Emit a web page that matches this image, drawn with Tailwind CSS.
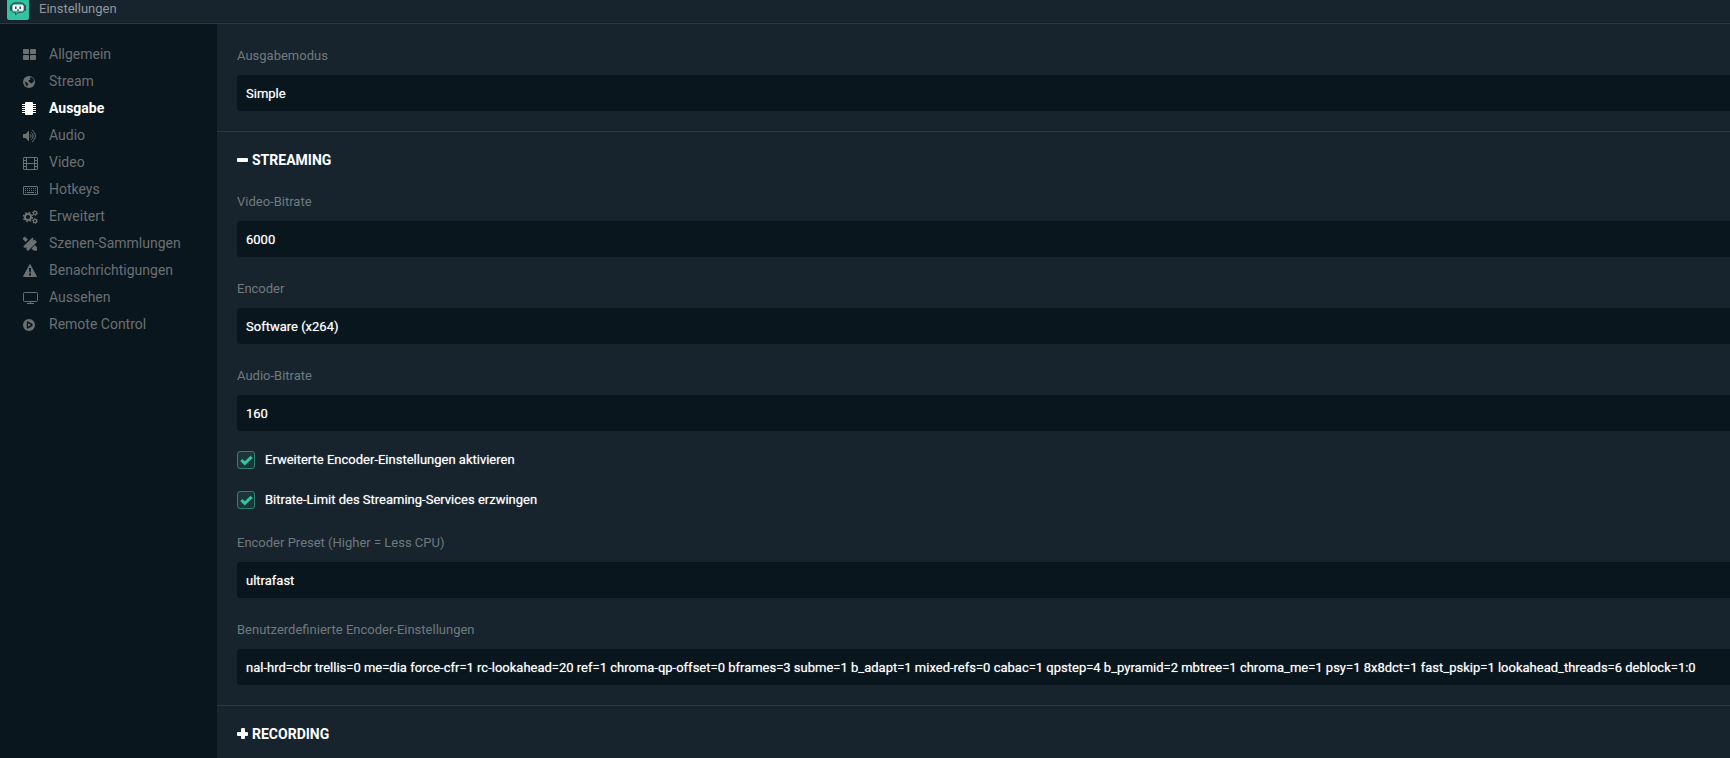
<!DOCTYPE html>
<html lang="de">
<head>
  <meta charset="UTF-8" />
  <meta name="viewport" content="width=device-width, initial-scale=1" />
  <title>Einstellungen</title>
  <script src="https://cdn.jsdelivr.net/npm/@tailwindcss/browser@4"></script>
  <style>
    body {
      font-family: 'Roboto', sans-serif;
    }
  </style>
</head>
<body class="bg-[#17242d] text-white min-h-screen flex flex-col overflow-x-hidden">

  <!-- Title bar -->
  <header class="flex items-start h-6 shrink-0 pl-[7px] gap-[10px] border-b border-[#2b383f]">
    <svg class="w-[22px] h-5" viewBox="0 0 22 20" aria-hidden="true">
      <path d="M0 0h22v18a2 2 0 0 1-2 2H2a2 2 0 0 1-2-2z" fill="#31c3a2" />
      <path d="M4.500 6C5 3.500 6.500 3 9 3h4c2.500 0 4 .5 4.500 3" fill="none" stroke="#34505a" stroke-width="1.400" />
      <rect x="3" y="5" width="2.500" height="6" rx="1.200" fill="#34505a" />
      <rect x="16.500" y="5" width="2.500" height="6" rx="1.200" fill="#34505a" />
      <rect x="5.500" y="4.800" width="11" height="6" rx="1.500" fill="#fff" />
      <path d="M8 6.500h1.600v2.500H8zM12.400 6.500H14v2.500h-1.600z" fill="#34505a" />
      <path d="M10 9.500h2v1.300h-2z" fill="#34505a" />
      <path d="M5 11.300c1 1 2 1.200 3.500 1.200V15l2.500-2.500h2.500c1.500 0 2.500-.2 3.500-1.200" fill="none" stroke="#34505a" stroke-width="1" />
    </svg>
    <h1 class="text-[13px] leading-[17px] text-[#91979a]">Einstellungen</h1>
  </header>

  <div class="flex flex-grow">
    <!-- Sidebar -->
    <nav class="w-[217px] shrink-0 bg-[#09161d] pt-[17px] text-sm leading-[27px] text-[#6b7073]">
      <a href="#" class="flex items-center pl-[22px] gap-[11px]">
        <svg class="w-4 h-[17px]" viewBox="0 0 16 17" fill="currentColor" aria-hidden="true">
          <rect x="1" y="3" width="6" height="5" rx="1" />
          <rect x="8" y="3" width="6" height="5" rx="1" />
          <rect x="1" y="9" width="6" height="5" rx="1" />
          <rect x="8" y="9" width="6" height="5" rx="1" />
        </svg>
        <span>Allgemein</span>
      </a>
      <a href="#" class="flex items-center pl-[22px] gap-[11px]">
        <svg class="w-4 h-[17px]" viewBox="0 0 16 17" aria-hidden="true">
          <circle cx="7" cy="9" r="6" fill="currentColor" />
          <path d="M8.500 4.300l2 .5 1.300 1.700.2 2-1 .3-.8 1.500-1.200.2L8 9.300 6.800 8.800 6.500 7.500l1.200-.8 1-.2L7.800 5.300zM2.500 8.500l2 .8L6.300 10.700 5.800 12l-.8 1.500-1-1.200-.5-1.800z" fill="#09161d" />
        </svg>
        <span>Stream</span>
      </a>
      <a href="#" class="flex items-center pl-[22px] gap-[11px] font-bold text-white" aria-current="page">
        <svg class="w-4 h-[17px]" viewBox="0 0 16 17" fill="currentColor" aria-hidden="true">
          <rect x="3" y="2" width="8" height="13" rx="1" />
          <path d="M0 4h14v1H0zM0 6h14v1H0zM0 8h14v1H0zM0 10h14v1H0zM0 12h14v1H0z" />
        </svg>
        <span>Ausgabe</span>
      </a>
      <a href="#" class="flex items-center pl-[22px] gap-[11px]">
        <svg class="w-4 h-[17px]" viewBox="0 0 16 17" fill="none" stroke="currentColor" stroke-linecap="round" aria-hidden="true">
          <path d="M1 7h2.500L7 3.500v11L3.500 11H1z" fill="currentColor" stroke="none" />
          <path d="M8.500 7.500a2 2 0 0 1 0 3M9.500 5.500a4.200 4.200 0 0 1 0 7M10.500 3.500a6.500 6.500 0 0 1 0 11" />
        </svg>
        <span>Audio</span>
      </a>
      <a href="#" class="flex items-center pl-[22px] gap-[11px]">
        <svg class="w-4 h-[17px]" viewBox="0 0 16 17" fill="none" stroke="currentColor" aria-hidden="true">
          <rect x="1.500" y="3.500" width="14" height="12" rx="0.500" />
          <path d="M4.500 3.500v12M12.500 3.500v12M4.500 9.500h8M1.500 6.500h3M1.500 9.500h3M1.500 12.500h3M12.500 6.500h3M12.500 9.500h3M12.500 12.500h3" />
        </svg>
        <span>Video</span>
      </a>
      <a href="#" class="flex items-center pl-[22px] gap-[11px]">
        <svg class="w-4 h-[17px]" viewBox="0 0 16 17" fill="none" stroke="currentColor" aria-hidden="true">
          <rect x="1.500" y="5.500" width="14" height="8" rx="0.500" />
          <path d="M3 7.500h11M3 9.500h11" stroke-dasharray="1 1" />
          <path d="M3 11.500h1M5 11.500h7M13 11.500h1" />
        </svg>
        <span>Hotkeys</span>
      </a>
      <a href="#" class="flex items-center pl-[22px] gap-[11px]">
        <svg class="w-4 h-[17px]" viewBox="0 0 16 17" fill="none" stroke="currentColor" aria-hidden="true">
          <circle cx="6" cy="9" r="3" stroke-width="2" />
          <circle cx="6" cy="9" r="4.500" stroke-width="1.500" stroke-dasharray="1.770 1.764" />
          <circle cx="13" cy="5" r="1.600" stroke-width="1.300" />
          <circle cx="13" cy="5" r="2.500" stroke-dasharray="1.300 1.318" />
          <circle cx="13" cy="13" r="1.600" stroke-width="1.300" />
          <circle cx="13" cy="13" r="2.500" stroke-dasharray="1.300 1.318" />
        </svg>
        <span>Erweitert</span>
      </a>
      <a href="#" class="flex items-center pl-[22px] gap-[11px]">
        <svg class="w-4 h-[17px]" viewBox="0 0 16 17" fill="currentColor" aria-hidden="true">
          <path d="M10.500 2.500l1.300 1.300-1 1 .8.800 1-1L15 7l-9 9-2-2 1-1-.8-.8-1 1L1.200 11.500z" />
          <path d="M3.500 2.200L6 4.700 3.700 7 1.200 4.500c-.5-.5-.5-1 0-1.500l.8-.8c.5-.5 1-.5 1.500 0zM13 10l2 2.200v3.600l-3.600-.2L9.500 13.500z" />
        </svg>
        <span>Szenen-Sammlungen</span>
      </a>
      <a href="#" class="flex items-center pl-[22px] gap-[11px]">
        <svg class="w-4 h-[17px]" viewBox="0 0 16 17" aria-hidden="true">
          <path d="M8 2.500L14.500 14.500h-13z" fill="currentColor" stroke="currentColor" stroke-linejoin="round" />
          <path d="M7 6h2l-.3 4.500H7.300zM7 11.500h2v2H7z" fill="#09161d" />
        </svg>
        <span>Benachrichtigungen</span>
      </a>
      <a href="#" class="flex items-center pl-[22px] gap-[11px]">
        <svg class="w-4 h-[17px]" viewBox="0 0 16 17" fill="none" stroke="currentColor" aria-hidden="true">
          <rect x="1.500" y="3.500" width="14" height="9" rx="1" />
          <path d="M8.500 12.500v2M5 14.500h7" />
        </svg>
        <span>Aussehen</span>
      </a>
      <a href="#" class="flex items-center pl-[22px] gap-[11px]">
        <svg class="w-4 h-[17px]" viewBox="0 0 16 17" aria-hidden="true">
          <circle cx="7" cy="9" r="6" fill="currentColor" />
          <path d="M4.800 5.500h1.400L10.500 8v2l-4.300 2.500H4.800z" fill="#09161d" />
          <path d="M6 7.300L9 9l-3 1.700z" fill="currentColor" />
        </svg>
        <span>Remote Control</span>
      </a>
    </nav>

    <!-- Settings -->
    <main class="flex-grow min-w-0 text-[13px] leading-5">
      <section class="pl-5 pb-5 border-b border-[#2b383f]">
        <div class="flex flex-col pt-[22px]">
          <label for="outputMode" class="mb-[9px] text-[#6f7a7e]">Ausgabemodus</label>
          <select id="outputMode" class="appearance-none h-9 px-[9px] pt-px rounded-l-[3px] bg-[#09161d] [text-shadow:0_0_1px_#ffffff99]">
            <option>Simple</option>
          </select>
        </div>
      </section>

      <section class="pl-5 pt-[18px] pb-5 border-b border-[#2b383f]">
        <h2>
          <button class="flex items-center gap-1 text-sm leading-5 font-bold" aria-expanded="true">
            <svg class="w-[11px] h-3" viewBox="0 0 11 12" fill="currentColor" aria-hidden="true">
              <rect y="4" width="11" height="4" rx="1" />
            </svg>
            STREAMING
          </button>
        </h2>
        <div class="flex flex-col pt-[22px]">
          <label for="videoBitrate" class="mb-[9px] text-[#6f7a7e]">Video-Bitrate</label>
          <input id="videoBitrate" type="text" class="h-9 px-[9px] rounded-l-[3px] bg-[#09161d] [text-shadow:0_0_1px_#ffffff99]" value="6000" />
        </div>
        <div class="flex flex-col pt-[22px]">
          <label for="encoder" class="mb-[9px] text-[#6f7a7e]">Encoder</label>
          <select id="encoder" class="appearance-none h-9 px-[9px] pt-px rounded-l-[3px] bg-[#09161d] [text-shadow:0_0_1px_#ffffff99]">
            <option>Software (x264)</option>
          </select>
        </div>
        <div class="flex flex-col pt-[22px]">
          <label for="audioBitrate" class="mb-[9px] text-[#6f7a7e]">Audio-Bitrate</label>
          <select id="audioBitrate" class="appearance-none h-9 px-[9px] pt-px rounded-l-[3px] bg-[#09161d] [text-shadow:0_0_1px_#ffffff99]">
            <option>160</option>
          </select>
        </div>

        <div class="flex flex-col items-start gap-[18px] pt-[18px] leading-[22px] [text-shadow:0_0_1px_#ffffff99]">
          <label class="flex items-center gap-[10px]">
            <span class="grid">
              <input type="checkbox" checked class="peer col-start-1 row-start-1 appearance-none w-[18px] h-[18px] rounded-[3px] border border-[#26846f] bg-[#1b3539]" />
              <svg class="col-start-1 row-start-1 w-[18px] h-[18px] pointer-events-none invisible peer-checked:visible" viewBox="0 0 18 18" aria-hidden="true">
                <path d="M4.300 9l3.400 3.400L14.700 5.800" fill="none" stroke="#31c3a2" stroke-width="3" />
              </svg>
            </span>
            Erweiterte Encoder-Einstellungen aktivieren
          </label>
          <label class="flex items-center gap-[10px]">
            <span class="grid">
              <input type="checkbox" checked class="peer col-start-1 row-start-1 appearance-none w-[18px] h-[18px] rounded-[3px] border border-[#26846f] bg-[#1b3539]" />
              <svg class="col-start-1 row-start-1 w-[18px] h-[18px] pointer-events-none invisible peer-checked:visible" viewBox="0 0 18 18" aria-hidden="true">
                <path d="M4.300 9l3.400 3.400L14.700 5.800" fill="none" stroke="#31c3a2" stroke-width="3" />
              </svg>
            </span>
            Bitrate-Limit des Streaming-Services erzwingen
          </label>
        </div>

        <div class="flex flex-col pt-[22px]">
          <label for="preset" class="mb-[9px] text-[#6f7a7e]">Encoder Preset (Higher = Less CPU)</label>
          <select id="preset" class="appearance-none h-9 px-[9px] pt-px rounded-l-[3px] bg-[#09161d] [text-shadow:0_0_1px_#ffffff99]">
            <option>ultrafast</option>
          </select>
        </div>
        <div class="flex flex-col pt-[22px]">
          <label for="customSettings" class="mb-[9px] text-[#6f7a7e]">Benutzerdefinierte Encoder-Einstellungen</label>
          <input id="customSettings" type="text" class="h-9 px-[9px] rounded-l-[3px] bg-[#09161d] [text-shadow:0_0_1px_#ffffff99]" value="nal-hrd=cbr trellis=0 me=dia force-cfr=1 rc-lookahead=20 ref=1 chroma-qp-offset=0 bframes=3 subme=1 b_adapt=1 mixed-refs=0 cabac=1 qpstep=4 b_pyramid=2 mbtree=1 chroma_me=1 psy=1 8x8dct=1 fast_pskip=1 lookahead_threads=6 deblock=1:0" />
        </div>
      </section>

      <section class="pl-5 pt-[18px]">
        <h2>
          <button class="flex items-center gap-1 text-sm leading-5 font-bold" aria-expanded="false">
            <svg class="w-[11px] h-3" viewBox="0 0 11 12" fill="currentColor" aria-hidden="true">
              <rect y="4" width="11" height="4" rx="1" />
              <rect x="4" y="0" width="4" height="11" rx="1" />
            </svg>
            RECORDING
          </button>
        </h2>
      </section>
    </main>
  </div>

</body>
</html>
